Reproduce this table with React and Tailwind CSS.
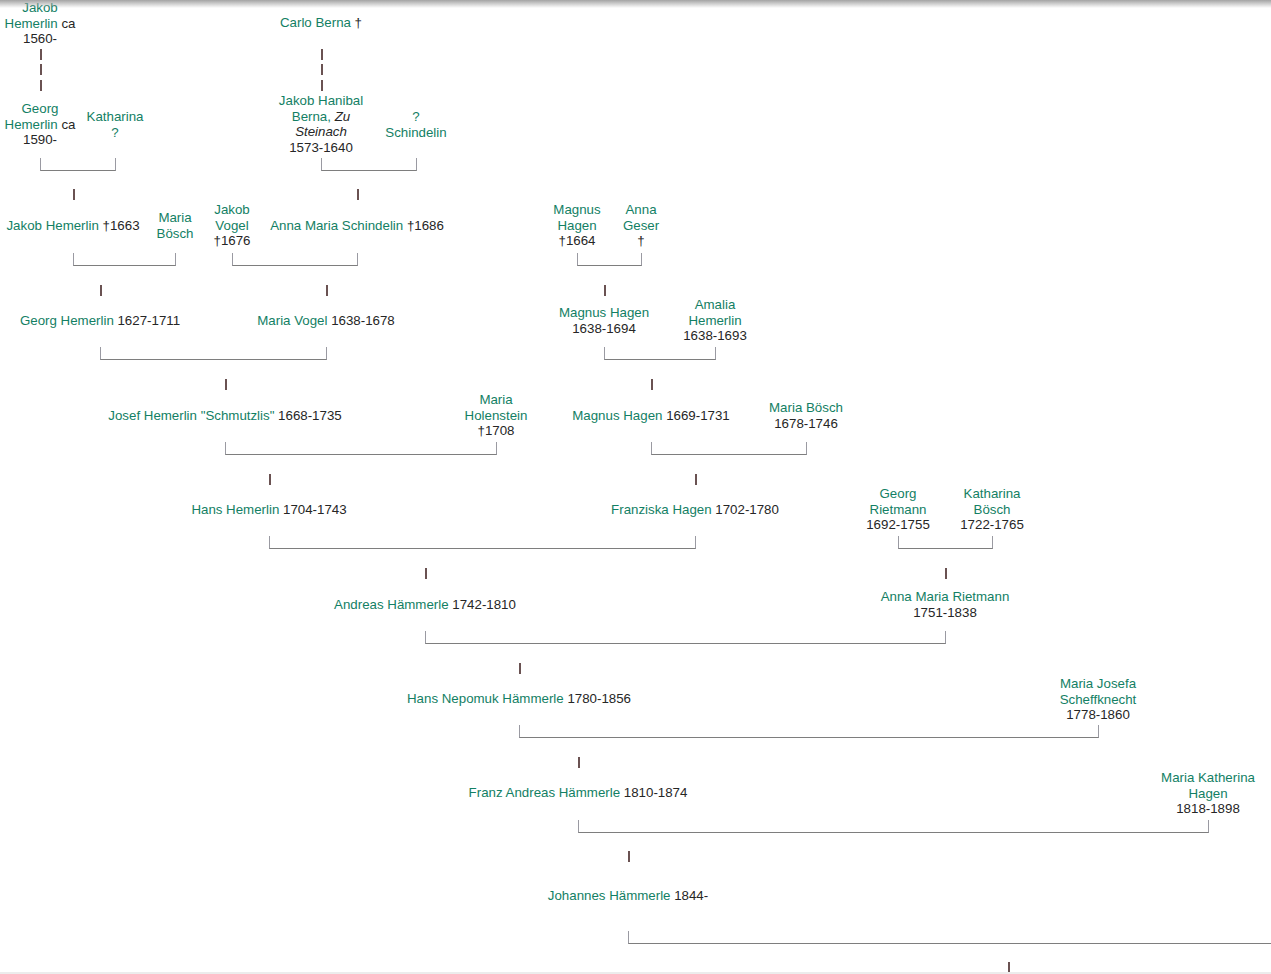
const G = ({ children }) => <span className="text-[#138064]">{children}</span>;

// people, placed by the centre of their box
const NODES = [
  { pos: 'left-[40px] top-[-1px]', body: <><G>Jakob</G><br /><G>Hemerlin</G> ca<br />1560-</> },
  { pos: 'left-[321px] top-[14px]', body: <><G>Carlo Berna</G> †</> },

  { pos: 'left-[40px] top-[100px]', body: <><G>Georg</G><br /><G>Hemerlin</G> ca<br />1590-</> },
  { pos: 'left-[115px] top-[108px]', body: <><G>Katharina</G><br /><G>?</G></> },
  { pos: 'left-[321px] top-[92px]', body: <><G>Jakob Hanibal</G><br /><G>Berna,</G> <i>Zu</i><br /><i>Steinach</i><br />1573-1640</> },
  { pos: 'left-[416px] top-[108px]', body: <><G>?</G><br /><G>Schindelin</G></> },

  { pos: 'left-[73px] top-[217px]', body: <><G>Jakob Hemerlin</G> †1663</> },
  { pos: 'left-[175px] top-[209px]', body: <><G>Maria</G><br /><G>Bösch</G></> },
  { pos: 'left-[232px] top-[201px]', body: <><G>Jakob</G><br /><G>Vogel</G><br />†1676</> },
  { pos: 'left-[357px] top-[217px]', body: <><G>Anna Maria Schindelin</G> †1686</> },
  { pos: 'left-[577px] top-[201px]', body: <><G>Magnus</G><br /><G>Hagen</G><br />†1664</> },
  { pos: 'left-[641px] top-[201px]', body: <><G>Anna</G><br /><G>Geser</G><br />†</> },

  { pos: 'left-[100px] top-[312px]', body: <><G>Georg Hemerlin</G> 1627-1711</> },
  { pos: 'left-[326px] top-[312px]', body: <><G>Maria Vogel</G> 1638-1678</> },
  { pos: 'left-[604px] top-[304px]', body: <><G>Magnus Hagen</G><br />1638-1694</> },
  { pos: 'left-[715px] top-[296px]', body: <><G>Amalia</G><br /><G>Hemerlin</G><br />1638-1693</> },

  { pos: 'left-[225px] top-[407px]', body: <><G>Josef Hemerlin "Schmutzlis"</G> 1668-1735</> },
  { pos: 'left-[496px] top-[391px]', body: <><G>Maria</G><br /><G>Holenstein</G><br />†1708</> },
  { pos: 'left-[651px] top-[407px]', body: <><G>Magnus Hagen</G> 1669-1731</> },
  { pos: 'left-[806px] top-[399px]', body: <><G>Maria Bösch</G><br />1678-1746</> },

  { pos: 'left-[269px] top-[501px]', body: <><G>Hans Hemerlin</G> 1704-1743</> },
  { pos: 'left-[695px] top-[501px]', body: <><G>Franziska Hagen</G> 1702-1780</> },
  { pos: 'left-[898px] top-[485px]', body: <><G>Georg</G><br /><G>Rietmann</G><br />1692-1755</> },
  { pos: 'left-[992px] top-[485px]', body: <><G>Katharina</G><br /><G>Bösch</G><br />1722-1765</> },

  { pos: 'left-[425px] top-[596px]', body: <><G>Andreas Hämmerle</G> 1742-1810</> },
  { pos: 'left-[945px] top-[588px]', body: <><G>Anna Maria Rietmann</G><br />1751-1838</> },

  { pos: 'left-[519px] top-[690px]', body: <><G>Hans Nepomuk Hämmerle</G> 1780-1856</> },
  { pos: 'left-[1098px] top-[675px]', body: <><G>Maria Josefa</G><br /><G>Scheffknecht</G><br />1778-1860</> },

  { pos: 'left-[578px] top-[784px]', body: <><G>Franz Andreas Hämmerle</G> 1810-1874</> },
  { pos: 'left-[1208px] top-[769px]', body: <><G>Maria Katherina</G><br /><G>Hagen</G><br />1818-1898</> },

  { pos: 'left-[628px] top-[887px]', body: <><G>Johannes Hämmerle</G> 1844-</> },
];

// couple brackets
const BRACKETS = [
  'left-[40px] w-[76px] top-[158px]',
  'left-[321px] w-[96px] top-[158px]',
  'left-[73px] w-[103px] top-[253px]',
  'left-[232px] w-[126px] top-[253px]',
  'left-[577px] w-[65px] top-[253px]',
  'left-[100px] w-[227px] top-[347px]',
  'left-[604px] w-[112px] top-[347px]',
  'left-[225px] w-[272px] top-[442px]',
  'left-[651px] w-[156px] top-[442px]',
  'left-[269px] w-[427px] top-[536px]',
  'left-[898px] w-[95px] top-[536px]',
  'left-[425px] w-[521px] top-[631px]',
  'left-[519px] w-[580px] top-[725px]',
  'left-[578px] w-[631px] top-[820px]',
  'left-[628px] w-[700px] top-[931px]',
];

// descent ticks
const TICKS = [
  'left-[40px] top-[49px]', 'left-[40px] top-[64px]', 'left-[40px] top-[80px]',
  'left-[321px] top-[49px]', 'left-[321px] top-[64px]', 'left-[321px] top-[80px]',
  'left-[73px] top-[189px]', 'left-[357px] top-[189px]',
  'left-[100px] top-[285px]', 'left-[326px] top-[285px]', 'left-[604px] top-[285px]',
  'left-[225px] top-[379px]', 'left-[651px] top-[379px]',
  'left-[269px] top-[474px]', 'left-[695px] top-[474px]',
  'left-[425px] top-[568px]', 'left-[945px] top-[568px]',
  'left-[519px] top-[663px]',
  'left-[578px] top-[757px]',
  'left-[628px] top-[851px]',
  'left-[1008px] top-[962px]',
];

export default function App() {
  return (
    <div
      className="relative w-full h-[974px] overflow-hidden bg-white text-[#262626] text-[13.3px] leading-[15.5px]"
      style={{ fontFamily: "'Liberation Sans', Arial, sans-serif" }}
    >
      {NODES.map((n, i) => (
        <div key={i} className={`absolute -translate-x-1/2 translate-y-px text-center whitespace-nowrap ${n.pos}`}>
          {n.body}
        </div>
      ))}

      {BRACKETS.map((b, i) => (
        <div key={i} className={`absolute h-[13px] border-l border-r border-b border-l-[#9a9aa2] border-r-[#9a9aa2] border-b-[#7e7e7e] ${b}`} />
      ))}

      {TICKS.map((t, i) => (
        <div key={i} className={`absolute w-[1.5px] h-[11px] bg-[#6a5252] ${t}`} />
      ))}

      {/* top shadow + bottom edge */}
      <div className="absolute top-0 left-0 right-0 h-[8px] bg-linear-to-b from-[#a4a4a4] to-transparent" />
      <div className="absolute bottom-0 left-0 right-0 h-[2px] bg-[#ececec]" />
    </div>
  );
}
